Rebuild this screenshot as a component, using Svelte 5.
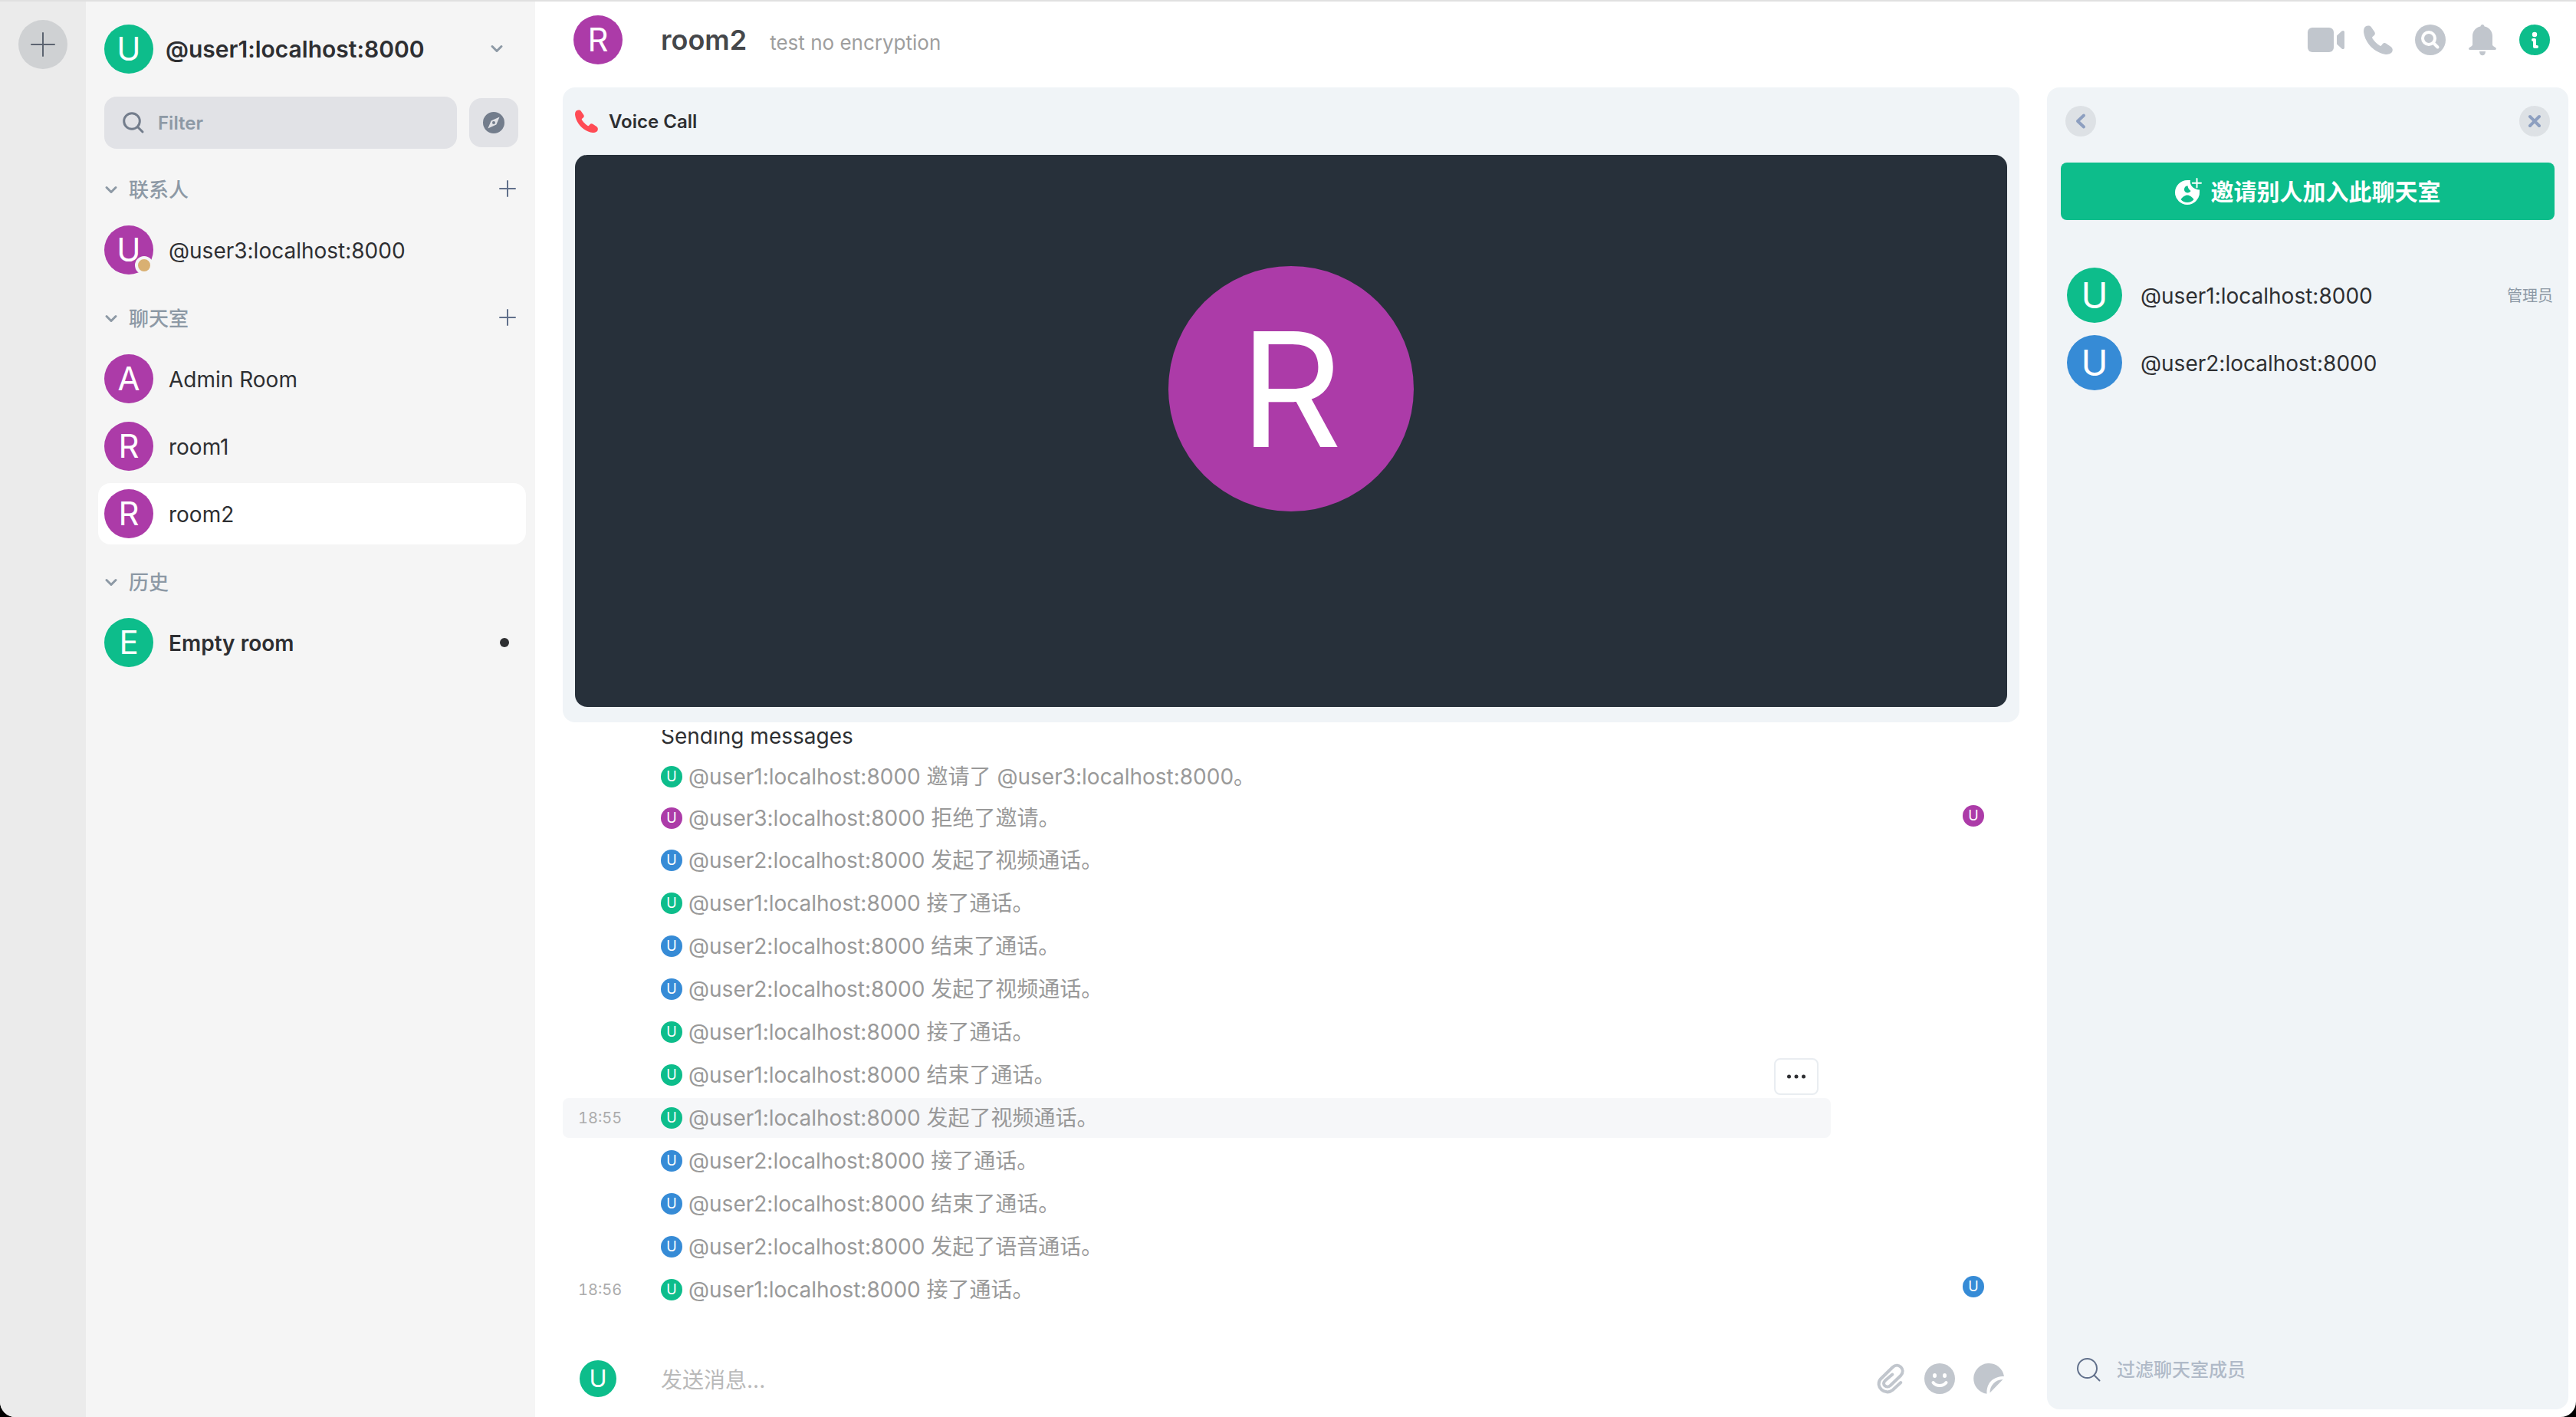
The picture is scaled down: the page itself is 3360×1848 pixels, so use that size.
<script lang="ts">
  const contacts = [{ letter: 'U', color: 'purple', name: '@user3:localhost:8000', away: true }];
  const rooms = [
    { letter: 'A', color: 'purple', name: 'Admin Room' },
    { letter: 'R', color: 'purple', name: 'room1' },
    { letter: 'R', color: 'purple', name: 'room2', selected: true },
  ];
  const history = [{ letter: 'E', color: 'green', name: 'Empty room', unread: true }];
  const sections = [
    { title: '联系人', add: true, tiles: contacts },
    { title: '聊天室', add: true, tiles: rooms },
    { title: '历史', add: false, tiles: history },
  ] as any[];

  const events = [
    { user: 1, text: '邀请了 @user3:localhost:8000。', compact: true },
    { user: 3, text: '拒绝了邀请。', compact: true, receipt: 'purple' },
    { user: 2, text: '发起了视频通话。' },
    { user: 1, text: '接了通话。' },
    { user: 2, text: '结束了通话。' },
    { user: 2, text: '发起了视频通话。' },
    { user: 1, text: '接了通话。' },
    { user: 1, text: '结束了通话。' },
    { user: 1, text: '发起了视频通话。', time: '18:55', active: true },
    { user: 2, text: '接了通话。' },
    { user: 2, text: '结束了通话。' },
    { user: 2, text: '发起了语音通话。' },
    { user: 1, text: '接了通话。', time: '18:56', receipt: 'blue' },
  ] as any[];
  const userColor: Record<number, string> = { 1: 'green', 2: 'blue', 3: 'purple' };

  const members = [
    { name: '@user1:localhost:8000', color: 'green', role: '管理员' },
    { name: '@user2:localhost:8000', color: 'blue', role: '' },
  ];
</script>

{#snippet avatar(letter: string, color: string, size: string)}
  <span class="avatar {color} {size}" aria-hidden="true">{letter}</span>
{/snippet}

{#snippet chevron()}
  <svg class="chevron" viewBox="0 0 16 10" aria-hidden="true"><path d="M2 1.5 8 7.5l6-6" /></svg>
{/snippet}

{#snippet handset()}
  <svg viewBox="0 0 38 38" aria-hidden="true">
    <path d="M2.5 1.6C5 0 8.300 0 10 2.400L14.200 8.600C15.400 10.500 15 12.300 13.300 13.600L11.600 15C11 15.600 11 16.300 11.400 17C14 21 17 24 21 26.600C21.700 27 22.400 27 23 26.400L24.400 24.700C25.700 23 27.500 22.600 29.400 23.800L35.600 28C38 29.700 38.400 32.500 37 35C35.500 37.200 32 38 29 37.900C14.500 36 2 23.500 .1 9C-.1 6 .6 3 2.500 1.600Z" />
  </svg>
{/snippet}

<div class="window">
  <nav class="rail" aria-label="Communities">
    <button class="rail-add" aria-label="Create community">
      <svg viewBox="0 0 30 30" aria-hidden="true"><path d="M15 0v30M0 15h30" /></svg>
    </button>
  </nav>

  <aside class="left">
    <button class="user-menu">
      {@render avatar('U', 'green', 's64')}
      <span class="user-name">@user1:localhost:8000</span>
      {@render chevron()}
    </button>

    <div class="filter-row">
      <label class="filter">
        <svg viewBox="0 0 28 28" aria-hidden="true"><circle cx="12" cy="12" r="10.300" /><path d="m19.500 19.500 6.500 6.500" /></svg>
        <input type="text" placeholder="Filter" aria-label="Filter" />
      </label>
      <button class="explore" aria-label="Explore rooms">
        <svg viewBox="0 0 28 28" aria-hidden="true">
          <path fill-rule="evenodd" d="M14 0a14 14 0 1 1 0 28 14 14 0 0 1 0-28Zm7.600 6.400-11 5.200-4.200 10 11-5.200ZM14 12a2 2 0 1 1 0 4 2 2 0 0 1 0-4Z" />
        </svg>
      </button>
    </div>

    {#each sections as section}
      <section>
        <div class="section-head">
          <button class="section-toggle">{@render chevron()}<span>{section.title}</span></button>
          {#if section.add}
            <button class="section-add" aria-label="Add">
              <svg viewBox="0 0 20 20" aria-hidden="true"><path d="M10 0v20M0 10h20" /></svg>
            </button>
          {/if}
        </div>
        {#each section.tiles as tile}
          <button class="tile" class:selected={tile.selected} class:unread={tile.unread}>
            <span class="tile-avatar">
              {@render avatar(tile.letter, tile.color, 's64')}
              {#if tile.away}<span class="presence"></span>{/if}
            </span>
            <span class="tile-name">{tile.name}</span>
            {#if tile.unread}<span class="unread-dot"></span>{/if}
          </button>
        {/each}
      </section>
    {/each}
  </aside>

  <main>
    <header class="room-head">
      {@render avatar('R', 'purple', 's64')}
      <h1>room2</h1>
      <p>test no encryption</p>
      <div class="head-actions">
        <button aria-label="Video call">
          <svg width="48" height="32" viewBox="0 0 48 32" aria-hidden="true"><rect width="34" height="32" rx="6" /><path d="M38 10.500 44.500 4.600C46 3.300 48 4 48 6v20c0 2-2 2.700-3.500 1.400L38 21.500Z" /></svg>
        </button>
        <button aria-label="Voice call" class="phone">{@render handset()}</button>
        <button aria-label="Search">
          <svg width="40" height="40" viewBox="0 0 40 40" aria-hidden="true"><circle cx="20" cy="20" r="20" /><circle class="line" cx="18" cy="18" r="8" /><path class="line" d="m24.500 24.500 5 5" /></svg>
        </button>
        <button aria-label="Notifications">
          <svg width="36" height="40" viewBox="0 0 36 40" aria-hidden="true"><path d="M18 0c1.500 0 2.300 1 2.600 2.400C26.500 3.600 31 8.500 31 15v11c0 1 .5 1.800 1.300 2.300L35 30c1.600 1.200 1 3-1 3H2c-2 0-2.600-1.800-1-3l2.700-1.700C4.500 27.800 5 27 5 26V15C5 8.500 9.500 3.600 15.400 2.400 15.700 1 16.500 0 18 0ZM14 35h8c0 7-8 7-8 0Z" /></svg>
        </button>
        <button aria-label="Room info" class="info">
          <svg width="40" height="40" viewBox="0 0 40 40" aria-hidden="true"><circle cx="20" cy="20" r="20" /><circle class="dot" cx="20" cy="13" r="3.200" /><path class="line" d="M18 20h2v9h3" /></svg>
        </button>
      </div>
    </header>

    <div class="content">
      <div class="timeline">
        <section class="call">
          <h2>{@render handset()}<span>Voice Call</span></h2>
          <div class="call-stage">{@render avatar('R', 'purple', 's320')}</div>
        </section>

        <div class="messages">
          <p class="plain">Sending messages</p>
          {#each events as event}
            <div class="event" class:compact={event.compact} class:active={event.active}>
              <div class="event-line">
                <span class="time">{event.time ?? ''}</span>
                {@render avatar('U', userColor[event.user], 's28')}
                <span class="event-text">@user{event.user}:localhost:8000 {event.text}</span>
                {#if event.active}
                  <button class="more" aria-label="Options">
                    <svg viewBox="0 0 24 6" aria-hidden="true"><circle cx="2.500" cy="3" r="2.500" /><circle cx="12" cy="3" r="2.500" /><circle cx="21.500" cy="3" r="2.500" /></svg>
                  </button>
                {/if}
              </div>
              {#if event.receipt}
                <div class="receipt">{@render avatar('U', event.receipt, 's28')}</div>
              {/if}
            </div>
          {/each}
        </div>

        <form class="composer">
          {@render avatar('U', 'green', 's48')}
          <input type="text" placeholder="发送消息..." aria-label="发送消息" />
          <button type="button" aria-label="Attach">
            <svg viewBox="-2 0 40 40" aria-hidden="true"><path class="clip" d="M31.300 25 20.800 34.800C11 43-3.500 30 5.200 20.200L20.500 5.200C28-2 38.500 8 31.200 16L17.600 29C12.500 33.500 6 27.500 10.600 22.800L20.300 14.500" /></svg>
          </button>
          <button type="button" aria-label="Emoji">
            <svg viewBox="0 0 40 40" aria-hidden="true"><circle cx="20" cy="20" r="20" /><ellipse class="hole" cx="13.500" cy="16" rx="2.500" ry="3" /><ellipse class="hole" cx="26.500" cy="16" rx="2.500" ry="3" /><path class="smile" d="M11.500 25c4 5.300 13 5.300 17 0" /></svg>
          </button>
          <button type="button" aria-label="Sticker">
            <svg viewBox="0 0 40 40" aria-hidden="true"><path d="M17.500 39.800A20 20 0 1 1 40 17C26 17 17 25 17.500 39.800ZM38.500 21 21.500 38.500C21.500 29 28 21.500 38.500 21Z" /></svg>
          </button>
        </form>
      </div>

      <aside class="right">
        <div class="right-head">
          <button aria-label="Back"><svg viewBox="0 0 40 40" aria-hidden="true"><path d="m24 12.500-8 7.500 8 7.500" /></svg></button>
          <button aria-label="Close"><svg viewBox="0 0 40 40" aria-hidden="true"><path d="m14 14 12 12M26 14 14 26" /></svg></button>
        </div>
        <button class="invite">
          <svg viewBox="0 0 34 34" aria-hidden="true">
            <path fill-rule="evenodd" d="M16 2h4c-1.500 6 4 12.500 12 12.500V18A16 16 0 1 1 16 2Zm.5 7.200c-6 .3-6 9.300-.3 9.300 2 0 3.500-1 4.300-2.500C18 14 16.800 12 16.500 9.200ZM7.500 27c2 2.500 5 4 8.500 4s6.500-1.500 8.500-4c-2-3-5-5.500-8.500-5.500S9.500 24 7.500 27Z" />
            <path class="plus" d="M28.500 0v11.500M22.800 5.800h11.200" />
          </svg>
          <span>邀请别人加入此聊天室</span>
        </button>
        <ul>
          {#each members as member}
            <li>
              {@render avatar('U', member.color, 's72')}
              <span class="member-name">{member.name}</span>
              <span class="role">{member.role}</span>
            </li>
          {/each}
        </ul>
        <label class="member-filter">
          <svg viewBox="0 0 30 30" aria-hidden="true"><circle cx="13.500" cy="13.500" r="12.500" /><path d="m22.500 22.500 7 7" /></svg>
          <input type="text" placeholder="过滤聊天室成员" aria-label="过滤聊天室成员" />
        </label>
      </aside>
    </div>
  </main>
</div>

<style>
  :global(body) { background: #000; }
  * { box-sizing: border-box; }
  .window {
    display: flex; height: 100vh; overflow: hidden;
    border-top: 2px solid #e0e0e0; border-radius: 0 0 20px 20px;
    background: #fff; color: #2e2f32;
    font: 400 28px/36px Inter, "Noto Sans CJK SC", sans-serif;
  }
  button { flex: none; padding: 0; border: 0; background: none; color: inherit; font: inherit; text-align: left; cursor: pointer; }
  input { min-width: 0; padding: 0; border: 0; outline: 0; background: none; color: inherit; font: inherit; }
  input::placeholder { opacity: 1; }
  h1, h2, p, ul { margin: 0; padding: 0; }
  svg { display: block; flex: none; overflow: visible; }

  .avatar { display: flex; flex: none; align-items: center; justify-content: center; border-radius: 50%; color: #fff; font-weight: 400; }
  .green { background: #0dbd8b; }
  .purple { background: #ac3ba8; }
  .blue { background: #368bd6; }
  .s28 { width: 28px; height: 28px; font-size: 18px; line-height: 28px; }
  .s48 { width: 48px; height: 48px; font-size: 31px; line-height: 48px; }
  .s64 { width: 64px; height: 64px; font-size: 42px; line-height: 64px; }
  .s72 { width: 72px; height: 72px; font-size: 47px; line-height: 72px; }
  .s320 { width: 320px; height: 320px; font-size: 208px; line-height: 320px; }

  .rail { flex: none; width: 112px; padding: 24px; background: #ebebeb; }
  .rail-add { display: flex; align-items: center; justify-content: center; width: 64px; height: 64px; border-radius: 50%; background: #cfd1d3; }
  .rail-add svg { width: 30px; height: 30px; fill: none; stroke: #5c6470; stroke-width: 2; stroke-linecap: round; }

  .left { flex: none; width: 586px; padding: 30px 12px 0 16px; background: #f5f5f5; }
  .chevron { width: 16px; height: 10px; fill: none; stroke: #8d99a5; stroke-width: 3; stroke-linecap: round; stroke-linejoin: round; }
  .user-menu { display: flex; align-items: center; width: 100%; padding: 0 30px 0 8px; }
  .user-name { flex: 1; margin-left: 16px; font-size: 30px; font-weight: 600; }
  .filter-row { display: flex; align-items: center; gap: 16px; margin-bottom: 12px; padding: 30px 10px 0 8px; }
  .filter { display: flex; flex: 1; align-items: center; gap: 18px; min-width: 0; height: 68px; padding: 0 24px; border-radius: 16px; background: #e1e2e6; }
  .filter svg { width: 28px; height: 28px; fill: none; stroke: #737d8c; stroke-width: 3; stroke-linecap: round; }
  .filter input { flex: 1; padding-top: 2px; font-size: 24px; font-weight: 600; }
  .filter input::placeholder { color: #8d99a5; }
  .explore { display: flex; align-items: center; justify-content: center; width: 64px; height: 64px; border-radius: 16px; background: #e1e2e6; }
  .explore svg { width: 28px; height: 28px; fill: #737d8c; }

  .section-head { display: flex; align-items: center; justify-content: space-between; height: 80px; padding: 0 14px 0 9px; }
  .section-toggle { display: flex; align-items: center; gap: 15px; padding-top: 4px; color: #8d99a5; font-size: 26px; font-weight: 500; }
  .section-add svg { width: 20px; height: 20px; fill: none; stroke: #61708b; stroke-width: 2; stroke-linecap: round; }
  .tile { display: flex; align-items: center; gap: 20px; width: 100%; height: 80px; margin-bottom: 8px; padding: 0 22px 0 8px; border-radius: 16px; }
  .tile.selected { background: #fff; }
  .tile.unread { font-weight: 600; }
  .tile-avatar { position: relative; }
  .presence { position: absolute; right: 0; bottom: 0; width: 24px; height: 24px; border: 4px solid #f5f5f5; border-radius: 50%; background: #d9b072; }
  .tile-name { flex: 1; padding-top: 2px; }
  .unread-dot { width: 12px; height: 12px; border-radius: 50%; background: #2e2f32; }

  main { display: flex; flex: 1; flex-direction: column; min-width: 0; }
  .room-head { display: flex; flex: none; align-items: center; height: 112px; padding: 0 30px 12px 50px; }
  h1 { margin-left: 50px; color: #45474a; font-size: 36px; font-weight: 600; line-height: 48px; }
  .room-head p { margin: 8px 0 0 30px; color: #9e9e9e; font-size: 26px; }
  .head-actions { display: flex; flex: 1; align-items: center; justify-content: flex-end; gap: 20px; }
  .head-actions button { display: flex; align-items: center; justify-content: center; width: 48px; height: 48px; }
  .head-actions svg { fill: #c1c6cd; }
  .phone :global(svg) { width: 38px; height: 38px; }
  .head-actions .info svg { fill: #0dbd8b; }
  .head-actions .line { fill: none; stroke: #fff; stroke-width: 4; stroke-linecap: round; stroke-linejoin: round; }
  .head-actions .dot { fill: #fff; }

  .content { display: flex; flex: 1; min-height: 0; padding: 0 10px 10px 36px; gap: 36px; }
  .timeline { display: flex; flex: 1; flex-direction: column; min-width: 0; }
  .call { flex: none; margin-bottom: 10px; padding: 24px 16px 20px; border-radius: 16px; background: #f0f4f7; }
  h2 { display: flex; align-items: center; gap: 14px; height: 40px; font-size: 24px; font-weight: 600; }
  h2 span { padding-top: 2px; }
  h2 svg { width: 30px; height: 30px; fill: #ff4b55; }
  .call-stage { display: flex; align-items: center; justify-content: center; height: 720px; margin-top: 24px; padding-bottom: 110px; border-radius: 16px; background: #27303a; }

  .messages { display: flex; flex: 1; flex-direction: column; justify-content: flex-end; min-height: 0; padding-bottom: 14px; overflow: hidden; }
  .plain { flex: none; margin-bottom: 10px; padding-left: 128px; }
  .event { display: grid; flex: none; grid-template-columns: minmax(0, 1fr) 246px; height: 52px; margin-bottom: 4px; }
  .event.compact { height: 50px; }
  .event-line { position: relative; display: flex; align-items: center; border-radius: 8px; color: #999; }
  .active .event-line { background: #f6f7f9; }
  .time { width: 108px; padding-left: 20px; color: #acacac; font-size: 20px; font-variant-numeric: tabular-nums; }
  .event-line .s28 { margin-left: 20px; }
  .event-text { margin-left: 8px; white-space: nowrap; }
  .more { position: absolute; top: -52px; right: 16px; display: flex; align-items: center; justify-content: center; width: 58px; height: 48px; border: 2px solid #e9edf1; border-radius: 8px; background: #fff; }
  .more svg { width: 24px; height: 6px; fill: #2e2f32; }
  .receipt { padding: 8px 0 0 172px; }

  .composer { display: flex; flex: none; align-items: center; gap: 24px; height: 122px; padding: 22px 20px 0 22px; margin-bottom: -10px; }
  .composer input { flex: 1; margin-left: 34px; padding-top: 4px; }
  .composer input::placeholder { color: #b9b9b9; }
  .composer svg { width: 40px; height: 40px; fill: #c1c6cd; }
  .composer .clip { fill: none; stroke: #c1c6cd; stroke-width: 4; stroke-linecap: round; }
  .composer .hole { fill: #fff; }
  .composer .smile { fill: none; stroke: #fff; stroke-width: 4; stroke-linecap: round; }

  .right { display: flex; flex: none; flex-direction: column; width: 680px; padding: 24px 18px 0; border-radius: 16px; background: #f0f4f7; }
  .right-head { display: flex; justify-content: space-between; padding: 0 6px; }
  .right-head button { width: 40px; height: 40px; border-radius: 50%; background: #dde1e5; }
  .right-head svg { width: 40px; height: 40px; fill: none; stroke: #8d9fc0; stroke-width: 4; stroke-linecap: round; stroke-linejoin: round; }
  .invite { display: flex; align-items: center; justify-content: center; gap: 13px; height: 75px; margin: 34px 0 54px; border-radius: 8px; background: #0dbd8b; color: #fff; font-size: 30px; font-weight: 600; }
  .invite svg { width: 34px; height: 34px; fill: #fff; }
  .invite .plus { fill: none; stroke: #fff; stroke-width: 2; stroke-linecap: round; }
  ul { flex: 1; list-style: none; }
  li { display: flex; align-items: center; height: 88px; padding: 0 2px 0 8px; }
  .member-name { flex: 1; margin-left: 24px; padding-top: 2px; }
  .role { padding-top: 2px; color: #8d99a5; font-size: 20px; }
  .member-filter { display: flex; align-items: center; gap: 22px; height: 104px; padding-left: 21px; }
  .member-filter svg { width: 30px; height: 30px; fill: none; stroke: #61708b; stroke-width: 2; stroke-linecap: round; }
  .member-filter input { flex: 1; padding-top: 2px; font-size: 24px; font-weight: 500; }
  .member-filter input::placeholder { color: #b0bac8; }
</style>
